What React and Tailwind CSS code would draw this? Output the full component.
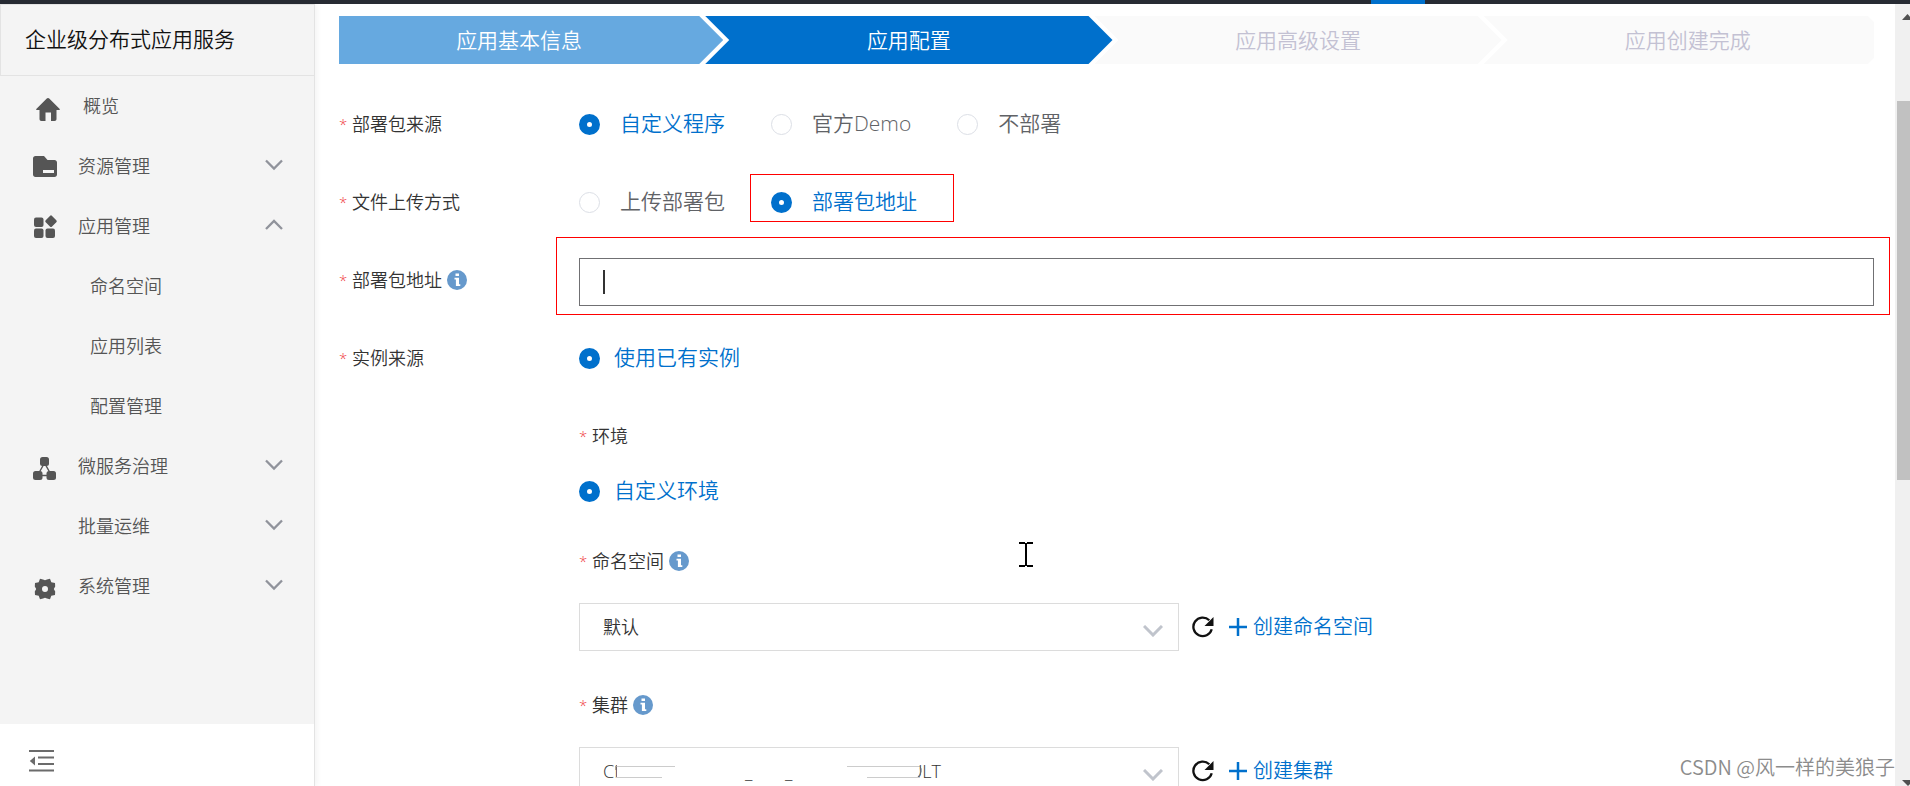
import { useState } from "react";

const menu = [
  { label: "概览", icon: "home" },
  { label: "资源管理", icon: "folder", arrow: "down" },
  {
    label: "应用管理",
    icon: "apps",
    arrow: "up",
    children: ["命名空间", "应用列表", "配置管理"],
  },
  { label: "微服务治理", icon: "nodes", arrow: "down" },
  { label: "批量运维", arrow: "down" },
  { label: "系统管理", icon: "gear", arrow: "down" },
];

const icons = {
  home: (
    <path
      transform="translate(3 0)"
      d="M12 1c.6 0 1 .2 1.500.7l10 10c.6.7.3 1.300-.5 1.300h-2.500v9c0 1.300-.7 2-2 2H15v-8.500H9.500V24H5.500c-1.300 0-2-.7-2-2v-9H1c-.8 0-1.100-.6-.5-1.300l10-10C11 1.200 11.400 1 12 1Z"
    />
  ),
  folder: (
    <path
      fillRule="evenodd"
      d="M2.500-1H11l3.500 4h7C22.900 3 24 4 24 5.500v12c0 1.400-1 2.500-2.500 2.500h-19C1 20 0 18.900 0 17.500v-16C0 0 1-1 2.500-1ZM10 13v3h11v-3Z"
    />
  ),
  apps: (
    <g transform="translate(0 -2)">
      <rect x="1" y="2.500" width="9.500" height="9.500" rx="2" />
      <rect x="1" y="13.500" width="9.500" height="9.500" rx="2" />
      <rect x="12.500" y="13.500" width="9.500" height="9.500" rx="2" />
      <rect x="13.500" y="1.700" width="9" height="9" rx="1.500" transform="rotate(45 18 6.200)" />
    </g>
  ),
  nodes: (
    <>
      <path d="M11.500 6 4.500 18.500h14Z" fill="none" stroke="currentColor" strokeWidth="1.400" />
      <rect x="7" y="0" width="9" height="9" rx="2.500" />
      <rect x="0" y="14" width="9.500" height="9" rx="2.500" />
      <rect x="13.500" y="14" width="9.500" height="9" rx="2.500" />
    </>
  ),
  gear: (
    <path
      fillRule="evenodd"
      d="M7 1.800 10 2.500 12 3.200 14 2.500 17 1.800 18.300 5.200 22 6 22.200 9.500 20.800 12 22.200 14.500 22 18 18.300 18.800 17 22.200 14 21.500 12 20.800 10 21.500 7 22.200 5.700 18.800 2 18 1.800 14.500 3.200 12 1.800 9.500 2 6 5.700 5.200ZM12 9a3 3 0 1 0 0 6 3 3 0 0 0 0-6Z"
    />
  ),
};

function MenuIcon({ name }) {
  return (
    <svg
      viewBox="0 0 24 24"
      className="mt-[6px] h-6 w-6 shrink-0 overflow-visible text-[#555]"
      fill="currentColor"
    >
      {icons[name]}
    </svg>
  );
}

function Arrow({ direction }) {
  return (
    <svg
      viewBox="0 0 18 10"
      className="mb-[2px] h-[10px] w-[18px] overflow-visible"
      fill="none"
      stroke="#90939b"
      strokeWidth="2.300"
    >
      <path d={direction === "up" ? "M1 9l8-8 8 8" : "M1 .5l8 8 8-8"} />
    </svg>
  );
}

function Sidebar() {
  return (
    <aside className="flex w-[315px] shrink-0 flex-col border-r border-[#e3e3e3] bg-[#f4f4f4] shadow-[2px_0_6px_rgba(0,0,0,0.05)]">
      <h1 className="flex h-[72px] shrink-0 items-center border-y border-l border-[#e3e3e3] pl-6 text-[21px] text-[#111]">
        企业级分布式应用服务
      </h1>
      <nav className="flex-1 text-[18px] text-[#555]">
        {menu.map((item) => (
          <div key={item.label}>
            <button type="button" className="flex h-[60px] w-full items-center pr-[31px] pl-[33px]">
              <span className="w-6 shrink-0">{item.icon && <MenuIcon name={item.icon} />}</span>
              <span className={item.icon === "home" ? "pl-[26px]" : "pl-[21px]"}>{item.label}</span>
              <span className="ml-auto">{item.arrow && <Arrow direction={item.arrow} />}</span>
            </button>
            {item.children?.map((child) => (
              <a key={child} href="#" className="flex h-[60px] items-center pl-[90px]">
                {child}
              </a>
            ))}
          </div>
        ))}
      </nav>
      <div className="flex h-[62px] shrink-0 items-center bg-white pl-[29px]">
        <button type="button" aria-label="收起菜单" className="mt-3">
          <svg viewBox="0 0 25 22" className="h-[22px] w-[25px]" stroke="#6b6b6b" strokeWidth="2">
            <path d="M0 1h25M9 7.500h16M9 14h16M0 20.500h25" />
            <path d="M6 6.500v9L.8 11Z" fill="#6b6b6b" stroke="none" />
          </svg>
        </button>
      </div>
    </aside>
  );
}

function Steps() {
  return (
    <ol className="grid h-12 grid-cols-[384fr_389fr_389fr_372fr] text-[21px]">
      <li className="flex items-center justify-center bg-[#66a9e0] pt-[2px] pr-6 text-white [clip-path:polygon(0_0,calc(100%_-_24px)_0,100%_50%,calc(100%_-_24px)_100%,0_100%)]">
        应用基本信息
      </li>
      <li className="-ml-[18px] flex items-center justify-center bg-[#0070cc] pt-[2px] text-white [clip-path:polygon(0_0,calc(100%_-_24px)_0,100%_50%,calc(100%_-_24px)_100%,0_100%,24px_50%)]">
        应用配置
      </li>
      <li className="-ml-[18px] flex items-center justify-center bg-[#fafafa] pt-[2px] text-[#c3c1d3] [clip-path:polygon(0_0,calc(100%_-_24px)_0,100%_50%,calc(100%_-_24px)_100%,0_100%,24px_50%)]">
        应用高级设置
      </li>
      <li className="-ml-[18px] flex items-center justify-center bg-[#fafafa] pt-[2px] pl-[18px] text-[#c3c1d3] [clip-path:polygon(0_0,calc(100%_-_6px)_0,100%_6px,100%_calc(100%_-_6px),calc(100%_-_6px)_100%,0_100%,24px_50%)]">
        应用创建完成
      </li>
    </ol>
  );
}

function InfoIcon() {
  return (
    <svg viewBox="0 0 20 20" className="ml-[5px] h-5 w-5">
      <circle cx="10" cy="10" r="10" fill="#6699cc" />
      <path d="M8.500 3.500h3.500v2.600H8.500ZM7.500 7.700H12v6.500h1.300v1.900H8.900V9.500H7.500Z" fill="#fff" />
    </svg>
  );
}

function FieldLabel({ children, info, htmlFor }) {
  return (
    <div className="flex items-center text-[18px] text-[#333]">
      <span className="w-[13px] text-[15px] text-[#f04040]">*</span>
      <label htmlFor={htmlFor}>{children}</label>
      {info && <InfoIcon />}
    </div>
  );
}

function Row({ label, info, htmlFor, children }) {
  return (
    <div className="flex h-[78px] items-center">
      <div className="w-60 shrink-0">
        <FieldLabel info={info} htmlFor={htmlFor}>
          {label}
        </FieldLabel>
      </div>
      {children}
    </div>
  );
}

function Radio({ name, label, checked, onChange, tight, marked }) {
  return (
    <label
      className={`relative flex items-center text-[21px] ${tight ? "gap-[14px]" : "gap-5"} ${
        checked ? "text-[#0070cc]" : "text-[#606266]"
      }`}
    >
      <input
        type="radio"
        name={name}
        checked={checked}
        onChange={onChange}
        className="h-[21px] w-[21px] appearance-none rounded-full border border-[#dcdfe6] bg-white checked:border-8 checked:border-[#0070cc]"
      />
      {label}
      {marked && (
        <span className="absolute -top-3 -right-[37px] -bottom-1 -left-[21px] border border-[#f00]" />
      )}
    </label>
  );
}

function RadioGroup({ name, options, value, onChange, tight, marked }) {
  return (
    <div className="flex gap-[46px]">
      {options.map((option) => (
        <Radio
          key={option}
          name={name}
          label={option}
          checked={value === option}
          onChange={() => onChange?.(option)}
          tight={tight}
          marked={marked === option}
        />
      ))}
    </div>
  );
}

function SelectRow({ id, option, action, children }) {
  return (
    <div className="flex items-center">
      <div className="relative w-[600px]">
        <select
          id={id}
          className="h-12 w-full appearance-none border border-[#dcdcdc] bg-white pl-[23px] text-[18px] text-[#333]"
        >
          <option>{option}</option>
        </select>
        <svg
          viewBox="0 0 20 12"
          className="pointer-events-none absolute top-[22px] right-4 h-3 w-5"
          fill="none"
          stroke="#c0c4cc"
          strokeWidth="3"
        >
          <path d="m1 1 9 9 9-9" />
        </svg>
        {children}
      </div>
      <button type="button" aria-label="刷新" className="ml-[13px]">
        <svg viewBox="0 0 22 22" className="h-[22px] w-[22px]">
          <path
            d="M19.700 13.200A9.300 9.300 0 1 1 17.300 4.300"
            fill="none"
            stroke="#111"
            strokeWidth="2.300"
          />
          <path d="M21.500 1v9h-9Z" fill="#111" />
        </svg>
      </button>
      <a href="#" className="ml-[15px] flex items-center gap-[6px] text-[20px] text-[#0070cc]">
        <svg viewBox="0 0 18 18" className="h-[18px] w-[18px]" stroke="currentColor" strokeWidth="2.500">
          <path d="M9 0v18M0 9h18" />
        </svg>
        {action}
      </a>
    </div>
  );
}

// hides the middle of the cluster id
function Redaction() {
  return (
    <svg viewBox="0 0 312 14" className="absolute top-[17px] left-[36px] h-[14px] w-[312px]">
      <path d="M2 0h298q8 6 2 14h-120l-4-2-60 1-116 1Z" fill="#fff" />
      <path d="M1 2.500h59M1 13.500h46M232 2.500h73M252 13.500h53" fill="none" stroke="#ccc" />
      <path d="M1 2v4M305 2q3 6-2 11" fill="none" stroke="#666" />
    </svg>
  );
}

function Scrollbar() {
  return (
    <div className="flex w-[15px] shrink-0 flex-col bg-[#f0f0f0] pl-[2px]">
      <svg viewBox="0 0 13 16" className="h-4 w-[13px]">
        <path d="M5 16l5.500-6 5.500 6Z" fill="#505050" />
      </svg>
      <div className="mt-[81px] h-[379px] bg-[#c1c1c1]" />
      <svg viewBox="0 0 13 6" className="mt-auto h-[6px] w-[13px]">
        <path d="M5 0h12l-6 6Z" fill="#505050" />
      </svg>
    </div>
  );
}

export default function App() {
  const [source, setSource] = useState("自定义程序");
  const [upload, setUpload] = useState("部署包地址");
  const [address, setAddress] = useState("");

  return (
    <div className="relative flex h-screen flex-col overflow-hidden bg-white font-['Open_Sans','Noto_Sans_CJK_SC',sans-serif] font-[350]">
      <div className="flex h-1 shrink-0 bg-[#272b33] pl-[1371px]">
        <span className="w-[54px] bg-[#0070cc]" />
      </div>
      <div className="flex min-h-0 flex-1">
        <Sidebar />
        <main className="min-w-0 flex-1 overflow-hidden pt-3 pr-[21px] pl-6">
          <Steps />
          <form className="mt-[21px]">
            <Row label="部署包来源">
              <RadioGroup
                name="source"
                options={["自定义程序", "官方Demo", "不部署"]}
                value={source}
                onChange={setSource}
              />
            </Row>
            <Row label="文件上传方式">
              <RadioGroup
                name="upload"
                options={["上传部署包", "部署包地址"]}
                value={upload}
                onChange={setUpload}
                marked="部署包地址"
              />
            </Row>
            <Row label="部署包地址" info htmlFor="address">
              <div className="relative mt-1 flex-1">
                <input
                  id="address"
                  type="text"
                  value={address}
                  onChange={(e) => setAddress(e.target.value)}
                  className="block h-12 w-full border border-[#707073] px-[23px] text-[18px] text-[#333] outline-none"
                />
                <span className="pointer-events-none absolute top-3 left-6 h-6 w-[2px] bg-[#333]" />
                <span className="pointer-events-none absolute -top-[21px] -right-4 -bottom-[9px] -left-[23px] border border-[#f00]" />
              </div>
            </Row>
            <Row label="实例来源">
              <RadioGroup name="instance" options={["使用已有实例"]} value="使用已有实例" tight />
            </Row>
            <div className="pl-60">
              <div className="flex h-[78px] items-center">
                <FieldLabel>环境</FieldLabel>
              </div>
              <div className="flex h-8 items-center">
                <RadioGroup name="env" options={["自定义环境"]} value="自定义环境" tight />
              </div>
              <div className="mt-[14px] mb-[2px] flex h-20 items-center">
                <FieldLabel info htmlFor="namespace">
                  命名空间
                </FieldLabel>
              </div>
              <SelectRow id="namespace" option="默认" action="创建命名空间" />
              <div className="mt-[14px] mb-[2px] flex h-20 items-center">
                <FieldLabel info htmlFor="cluster">
                  集群
                </FieldLabel>
              </div>
              <SelectRow
                id="cluster"
                option={`CL${"\u00a0".repeat(26)}_${"\u00a0".repeat(7)}_${"\u00a0".repeat(25)}ULT`}
                action="创建集群"
              >
                <Redaction />
              </SelectRow>
            </div>
          </form>
        </main>
        <Scrollbar />
      </div>
      <svg
        viewBox="0 0 14 25"
        className="pointer-events-none absolute top-[542px] left-[1019px] h-[25px] w-[14px]"
        fill="none"
        stroke="#000"
        strokeWidth="2"
      >
        <path d="M0 1h6M8 1h6M7 1v23M0 24h6M8 24h6" />
      </svg>
      <p className="absolute right-[15px] bottom-1 font-['Noto_Sans_CJK_SC',sans-serif] text-[20px] text-[#8c8c8c]">
        CSDN @风一样的美狼子
      </p>
    </div>
  );
}
